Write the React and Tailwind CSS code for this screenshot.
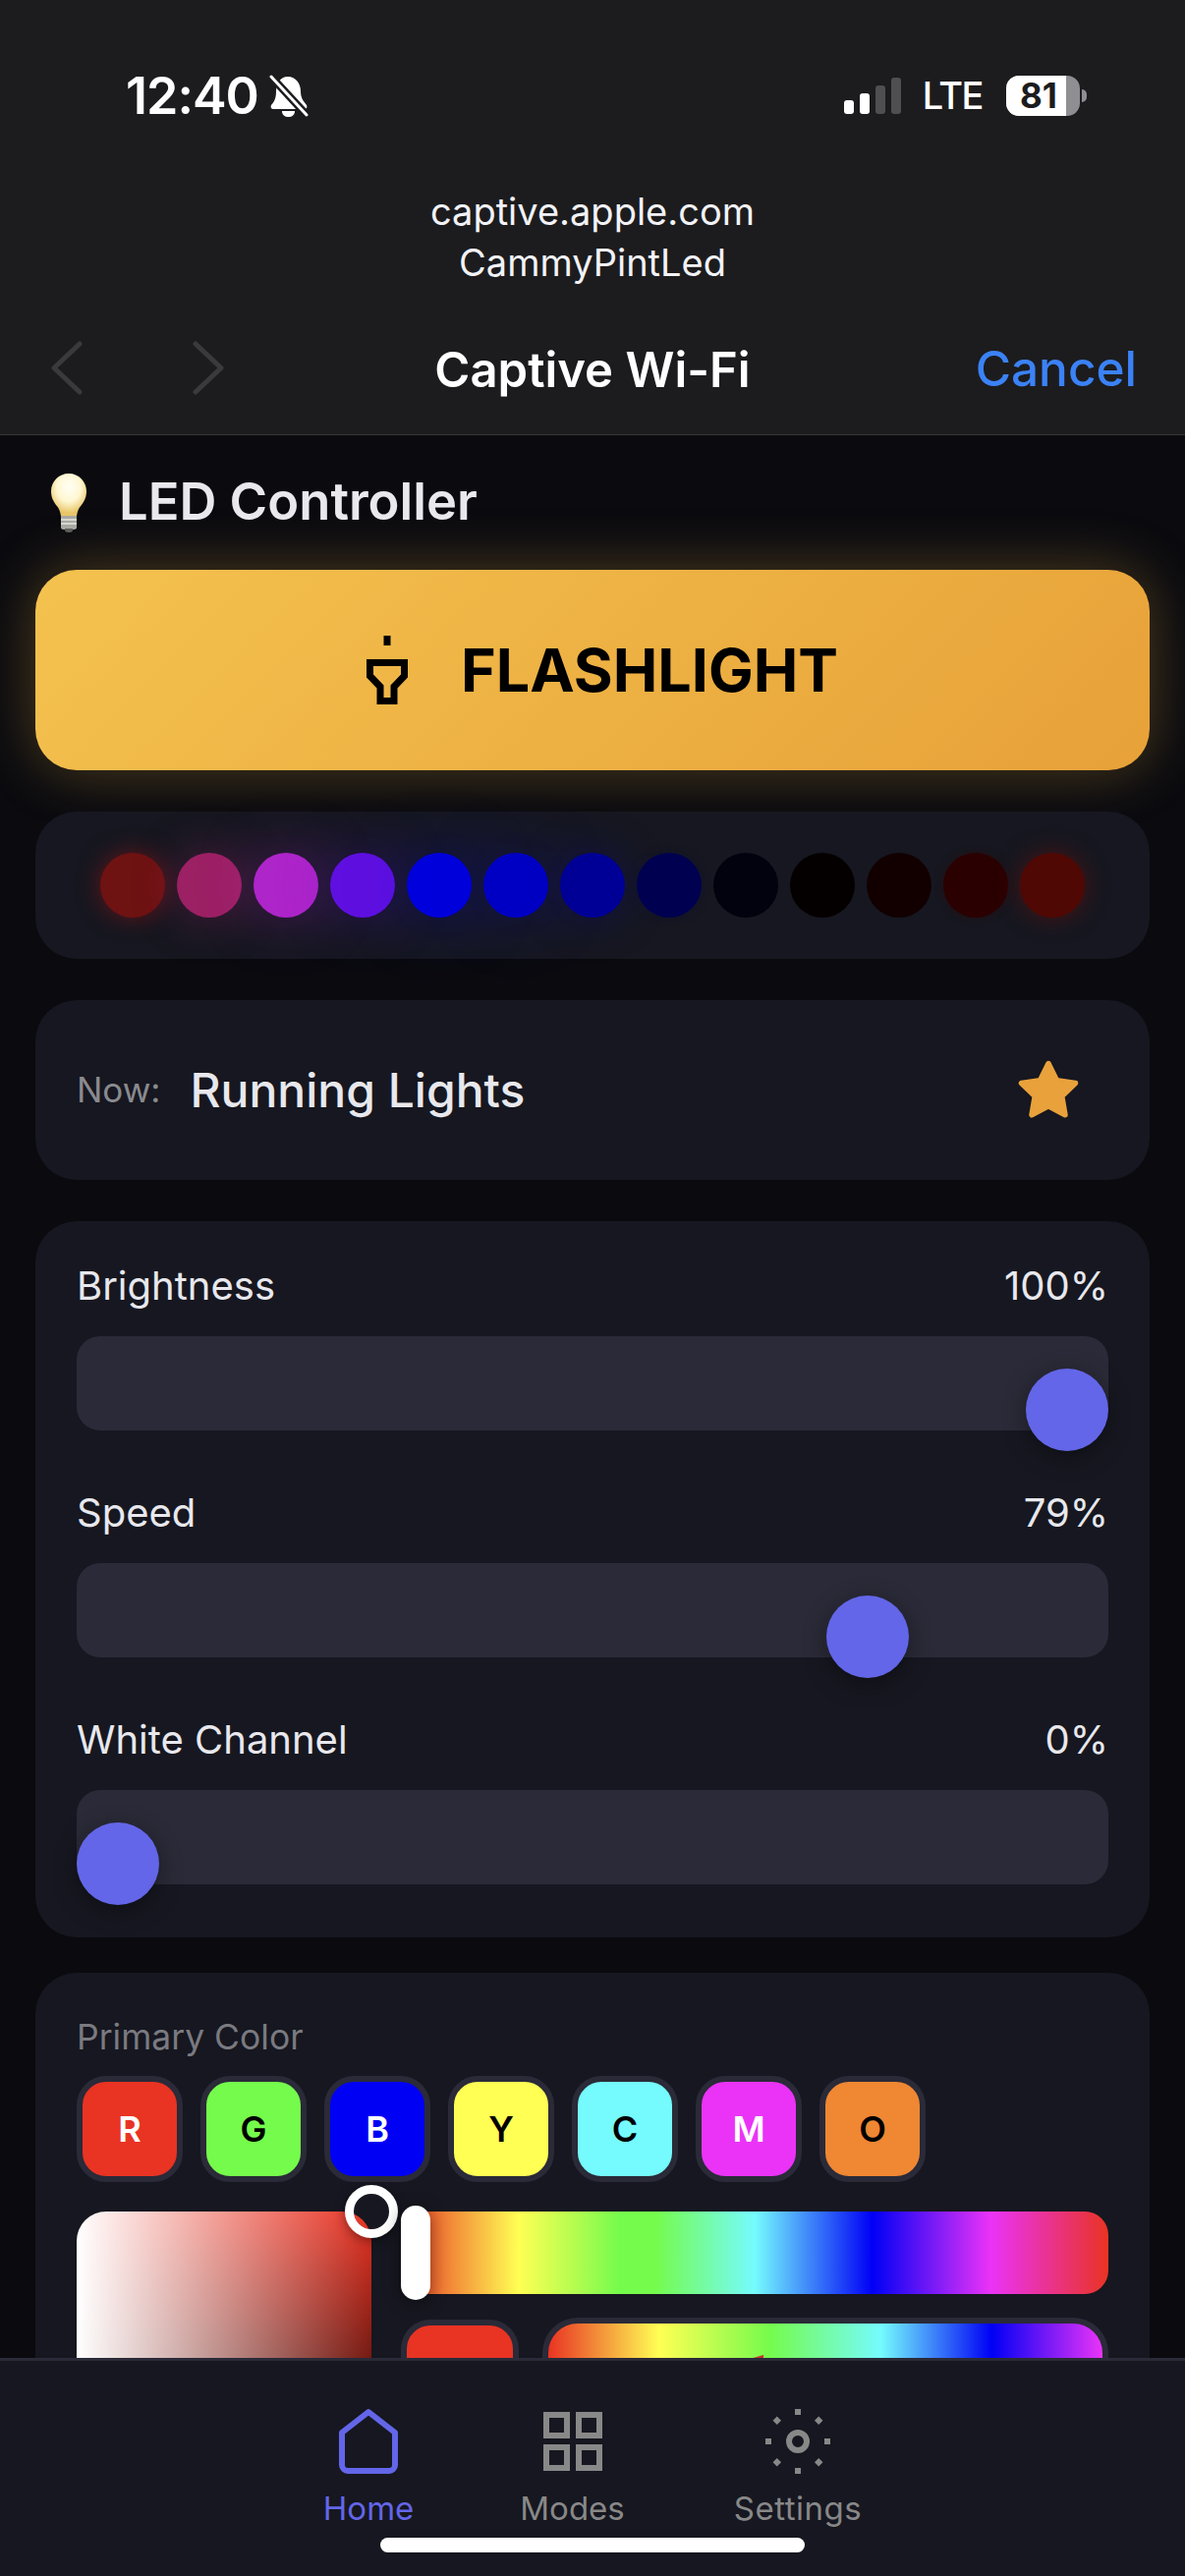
const dots = [
  "bg-[#6e1212] shadow-[0_0_24px_rgba(180,20,20,0.5)]",
  "bg-[#9c2064] shadow-[0_0_48px_rgba(190,40,120,0.35)]",
  "bg-[#ae25c9] shadow-[0_0_60px_rgba(190,40,220,0.35)]",
  "bg-[#5f10e0] shadow-[0_0_60px_rgba(90,20,230,0.32)]",
  "bg-[#0000dc] shadow-[0_0_66px_rgba(10,10,230,0.35)]",
  "bg-[#0000c4] shadow-[0_0_66px_rgba(10,10,210,0.32)]",
  "bg-[#000096] shadow-[0_0_48px_rgba(5,5,170,0.3)]",
  "bg-[#000050] shadow-[0_0_12px_rgba(5,5,90,0.2)]",
  "bg-[#02020f]",
  "bg-[#050000]",
  "bg-[#120000]",
  "bg-[#2a0000] shadow-[0_0_10px_rgba(60,0,0,0.4)]",
  "bg-[#4f0803] shadow-[0_0_24px_rgba(130,15,5,0.5)]",
];

const swatches = [
  ["R", "bg-[#e93323] text-white"],
  ["G", "bg-[#75fb4c] text-black"],
  ["B", "bg-[#0000f5] text-white"],
  ["Y", "bg-[#ffff54] text-black"],
  ["C", "bg-[#75fbfd] text-black"],
  ["M", "bg-[#ea33f7] text-white"],
  ["O", "bg-[#ef8733] text-black"],
];

function Slider({ label, value, thumb, last }) {
  return (
    <div className={last ? "" : "mb-[60px]"}>
      <div className="flex justify-between items-center h-[48px] mb-[27px] text-[40px] text-[#e8e8ed] leading-none">
        <span>{label}</span>
        <span>{value}</span>
      </div>
      <div className="relative h-[96px] rounded-[24px] bg-[#2a2a38]">
        <div className={`absolute top-[33px] w-[84px] h-[84px] rounded-full bg-[#6366e8] shadow-[0_6px_24px_rgba(0,0,0,0.35)] ${thumb}`} />
      </div>
    </div>
  );
}

function NavItem({ label, color, extra, children }) {
  return (
    <div className={`flex flex-col items-center ${color} ${extra || ""}`}>
      <svg width="72" height="72" viewBox="0 0 24 24" fill="none" stroke="currentColor" strokeWidth="2">
        {children}
      </svg>
      <span className={`mt-[12px] text-[33px] leading-[40px] ${label === "Settings" ? "tracking-[0.5px]" : ""}`}>{label}</span>
    </div>
  );
}

export default function App() {
  return (
    <div className="relative w-full h-[2622px] overflow-hidden flex flex-col bg-[#0a0a0f] font-['Inter',sans-serif]">
      {/* Sheet header */}
      <header className="shrink-0 h-[443px] bg-[#1c1c1e] border-b border-[#38383a] flex flex-col">
        <div className="h-[189px] pt-[70px] pl-[128px] pr-[100px] flex justify-between items-start">
          <div className="flex items-center gap-[11px] h-[56px]">
            <span className="text-[52px] font-semibold text-white leading-none tracking-[-1px]">12:40</span>
            <svg width="40" height="44" viewBox="0 0 40 44">
              <path fill="#fff" d="M19 2c8 0 13 7 13 15 0 7 3 10 6 14 1 2 0 4-2 4H4c-2 0-3-2-2-4 3-3 5-7 5-14C7 9 11 2 19 2z" />
              <path fill="#fff" d="M13 37h13c0 4-3 6-6.500 6S13 41 13 37z" />
              <path stroke="#1c1c1e" strokeWidth="8" d="M1 1l38 41" />
              <path stroke="#fff" strokeWidth="3" strokeLinecap="round" d="M2 2l36 39" />
            </svg>
          </div>
          <div className="flex items-center h-[56px] mt-[-1px]">
            <div className="flex items-end gap-[6px] h-[38px]">
              <div className="w-[10px] h-[14px] rounded-[3px] bg-white" />
              <div className="w-[10px] h-[21px] rounded-[3px] bg-white" />
              <div className="w-[10px] h-[29px] rounded-[3px] bg-[#4f4f52]" />
              <div className="w-[10px] h-[37px] rounded-[3px] bg-[#4f4f52]" />
            </div>
            <span className="ml-[22px] text-[38px] font-medium text-white leading-none tracking-[-1.5px]">LTE</span>
            <div className="relative ml-[24px] w-[75px] h-[41px] rounded-[13px] overflow-hidden bg-[#8e8e93]">
              <div className="absolute inset-y-0 left-0 w-[61px] bg-white" />
              <span className="absolute inset-y-0 left-[14px] flex items-center text-[35px] font-bold text-[#1c1c1e] leading-none">81</span>
            </div>
            <div className="ml-[2px] w-[5px] h-[13px] rounded-r-full bg-[#8e8e93]" />
          </div>
        </div>
        <div className="flex flex-col items-center text-[38px] leading-[52px] text-[#f2f2f7]">
          <span>captive.apple.com</span>
          <span>CammyPintLed</span>
        </div>
        <div className="relative mt-[53px] flex items-center justify-center h-[60px]">
          <svg className="absolute left-[52px] top-[1px]" width="32" height="55" viewBox="0 0 32 55" fill="none" stroke="#3a3a3c" strokeWidth="5" strokeLinecap="round" strokeLinejoin="round">
            <path d="M29 3L3 27.500 29 52" />
          </svg>
          <svg className="absolute left-[196px] top-[1px]" width="32" height="55" viewBox="0 0 32 55" fill="none" stroke="#3a3a3c" strokeWidth="5" strokeLinecap="round" strokeLinejoin="round">
            <path d="M3 3l26 24.500L3 52" />
          </svg>
          <span className="text-[49px] font-semibold text-white leading-none">Captive Wi-Fi</span>
          <span className="absolute right-[49px] text-[49.500px] font-medium text-[#3b82f6] leading-none">Cancel</span>
        </div>
      </header>

      {/* Scrolling content */}
      <main className="flex-1 min-h-0 overflow-hidden px-[36px]">
        <div className="flex items-center h-[137px] pl-[16px]">
          <svg width="36" height="60" viewBox="0 0 36 60">
            <defs>
              <radialGradient id="glass" cx="50%" cy="32%" r="62%">
                <stop offset="0%" stopColor="#fffef5" />
                <stop offset="55%" stopColor="#fff7d2" />
                <stop offset="100%" stopColor="#e8c568" />
              </radialGradient>
            </defs>
            <path fill="url(#glass)" d="M18 0c10 0 18 8 18 18 0 6-2 10-5 14-3 3-4 6-5 11H10c-1-5-2-8-5-11-3-4-5-8-5-14C0 8 8 0 18 0z" />
            <path fill="#a9a9a4" d="M10 43h16v12c0 1-1 2-3 2h-10c-2 0-3-1-3-2z" />
            <path fill="#5e5e5c" d="M14 56h8v2c0 1-2 2-4 2s-4-1-4-2z" />
            <path stroke="#d8d8d2" strokeWidth="2" d="M10 47h16M10 51h16" />
          </svg>
          <h1 className="ml-[33px] mb-[2px] text-[52.500px] font-semibold leading-none text-[#e8e8ed]">LED Controller</h1>
        </div>

        <button className="w-full h-[204px] rounded-[42px] bg-[linear-gradient(135deg,#f4c24f,#e7a138)] shadow-[0_0_60px_rgba(245,190,70,0.3)] pl-[20px] flex items-center justify-center gap-[54px]">
          <svg width="42" height="70" viewBox="0 0 42 70" fill="none" stroke="#000" strokeWidth="7">
            <path d="M21 0v10" />
            <path d="M3.500 27.500h35V41L28 52v14.500H14V52L3.500 41z" />
          </svg>
          <span className="text-[61px] font-bold text-black leading-none">FLASHLIGHT</span>
        </button>

        <section className="mt-[42px] h-[150px] rounded-[42px] bg-[#161720] flex items-center justify-center gap-[12px]">
          {dots.map((d, i) => (
            <div key={i} className={`w-[66px] h-[66px] rounded-full ${d}`} />
          ))}
        </section>

        <section className="mt-[42px] h-[183px] rounded-[42px] bg-[#161720] pl-[42px] pr-[70px] flex items-center">
          <span className="text-[35px] text-[#8a8a8f] leading-none">Now:</span>
          <span className="ml-[30px] text-[48px] font-medium text-[#e8e8ed] leading-none">Running Lights</span>
          <svg className="ml-auto" width="66" height="66" viewBox="0 0 24 24" fill="#e9a23b" stroke="#e9a23b" strokeWidth="2" strokeLinejoin="round">
            <path d="M12 2l3.090 6.260L22 9.270l-5 4.870 1.180 6.880L12 17.770l-6.180 3.250L7 14.140 2 9.270l6.910-1.010z" />
          </svg>
        </section>

        <section className="mt-[42px] rounded-[42px] bg-[#161720] pt-[42px] px-[42px] pb-[54px]">
          <Slider label="Brightness" value="100%" thumb="left-[966px]" />
          <Slider label="Speed" value="79%" thumb="left-[763px]" />
          <Slider label="White Channel" value="0%" thumb="left-0" last />
        </section>

        <section className="mt-[36px] rounded-[42px] bg-[#161720] pt-[44px] px-[42px] pb-[42px]">
          <div className="text-[35.500px] leading-[44px] text-[#7a7a80]">Primary Color</div>
          <div className="mt-[17px] flex gap-[18px]">
            {swatches.map(([l, c]) => (
              <div key={l} className={`w-[108px] h-[108px] rounded-[30px] border-[6px] border-[#2a2a38] flex items-center justify-center text-[36px] font-semibold leading-none ${c}`}>
                {l}
              </div>
            ))}
          </div>
          <div className="mt-[30px] flex gap-[30px]">
            <div className="relative shrink-0 w-[300px] h-[300px] rounded-[30px] bg-[linear-gradient(to_right,#fff,transparent),linear-gradient(to_bottom,#e93323,#000)]">
              <div className="absolute left-[273px] top-[-27px] w-[54px] h-[54px] rounded-full border-[9px] border-white shadow-[0_3px_12px_rgba(0,0,0,0.4)]" />
            </div>
            <div className="flex-1 min-w-0">
              <div className="relative h-[84px] rounded-[24px] bg-[linear-gradient(to_right,#e93323,#ffff54_16.67%,#75fb4c_31%,#75fb4c_36%,#75fbfd_50%,#0000f5_66.67%,#ea33f7_83.33%,#e93323)]">
                <div className="absolute left-0 top-[-6px] w-[30px] h-[96px] rounded-[15px] bg-white shadow-[0_3px_18px_rgba(0,0,0,0.45)]" />
              </div>
              <div className="mt-[24px] flex gap-[24px] items-start">
                <div className="shrink-0 mt-[2px] w-[120px] h-[120px] rounded-[30px] border-[6px] border-[#2a2a38] bg-[#e93323]" />
                <div className="relative flex-1 h-[120px] rounded-[36px] border-[6px] border-[#2a2a38] bg-[linear-gradient(to_right,#e93323,#ffff54_20%,#75fb4c_40%,#75fbfd_60%,#0000f5_80%,#ea33f7)]">
                  <svg className="absolute left-[205px] top-[32px]" width="14" height="4" viewBox="0 0 14 4">
                    <path fill="#c8302a" d="M0 4L14 0v4z" />
                  </svg>
                </div>
              </div>
            </div>
          </div>
        </section>
      </main>

      {/* Bottom nav */}
      <nav className="relative z-10 shrink-0 h-[222px] bg-[#161720] border-t-[3px] border-[#2a2a38] pt-[46px] flex justify-center items-start gap-[111px]">
        <NavItem label="Home" color="text-[#6366e8]">
          <path strokeLinejoin="round" d="M3 9l9-7 9 7v11a2 2 0 0 1-2 2H5a2 2 0 0 1-2-2z" />
        </NavItem>
        <NavItem label="Modes" color="text-[#888888]" extra="ml-[-3px]">
          <rect x="3" y="3" width="7" height="7" />
          <rect x="14" y="3" width="7" height="7" />
          <rect x="14" y="14" width="7" height="7" />
          <rect x="3" y="14" width="7" height="7" />
        </NavItem>
        <NavItem label="Settings" color="text-[#888888]">
          <circle cx="12" cy="12" r="3" />
          <path d="M12 1v2M12 21v2M4.220 4.220l1.420 1.420M18.360 18.360l1.420 1.420M1 12h2M21 12h2M4.220 19.780l1.420-1.420M18.360 5.640l1.420-1.420" />
        </NavItem>
        <div className="absolute left-[387px] bottom-[24px] w-[432px] h-[15px] rounded-full bg-white" />
      </nav>
    </div>
  );
}
